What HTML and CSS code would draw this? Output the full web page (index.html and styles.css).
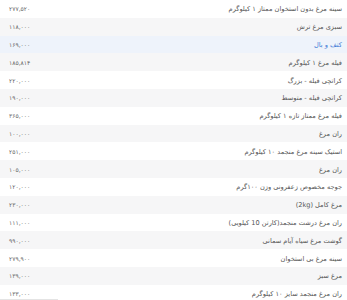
FILE: index.html
```html
<!DOCTYPE html>
<html lang="fa">
<head>
<meta charset="utf-8">
<link rel="stylesheet" href="styles.css">
</head>
<body>
<div class="frame">
<ul class="prices">
<li class="row"><span class="name">سینه مرغ بدون استخوان ممتاز ۱ کیلوگرم</span><span class="price">۲۷۷,۵۲۰</span></li>
<li class="row"><span class="name">سبزی مرغ ترش</span><span class="price">۱۱۸,۰۰۰</span></li>
<li class="row active"><span class="name">کتف و بال</span><span class="price">۱۶۹,۰۰۰</span></li>
<li class="row"><span class="name">فیله مرغ ۱ کیلوگرم</span><span class="price">۱۸۵,۸۱۴</span></li>
<li class="row"><span class="name">کراتچی فیله - بزرگ</span><span class="price">۲۲۰,۰۰۰</span></li>
<li class="row"><span class="name">کراتچی فیله - متوسط</span><span class="price">۱۹۰,۰۰۰</span></li>
<li class="row"><span class="name">فیله مرغ ممتاز تازه ۱ کیلوگرم</span><span class="price">۳۶۵,۰۰۰</span></li>
<li class="row"><span class="name">ران مرغ</span><span class="price">۱۰۰,۰۰۰</span></li>
<li class="row"><span class="name">استیک سینه مرغ منجمد ۱۰ کیلوگرم</span><span class="price">۲۵۱,۰۰۰</span></li>
<li class="row"><span class="name">ران مرغ</span><span class="price">۱۰۵,۰۰۰</span></li>
<li class="row"><span class="name">جوجه مخصوص زعفرونی وزن ۱۰۰گرم</span><span class="price">۱۲۰,۰۰۰</span></li>
<li class="row"><span class="name">مرغ کامل (2kg)</span><span class="price">۲۳۰,۰۰۰</span></li>
<li class="row"><span class="name">ران مرغ درشت منجمد(کارتن 10 کیلویی)</span><span class="price">۱۱۱,۰۰۰</span></li>
<li class="row"><span class="name">گوشت مرغ سیاه آیام سمانی</span><span class="price">۹۹۰,۰۰۰</span></li>
<li class="row"><span class="name">سینه مرغ بی استخوان</span><span class="price">۲۷۹,۹۰۰</span></li>
<li class="row"><span class="name">مرغ سبز</span><span class="price">۱۳۹,۰۰۰</span></li>
<li class="row"><span class="name">ران مرغ منجمد سایز ۱۰ کیلوگرم</span><span class="price">۱۳۳,۰۰۰</span></li>
</ul>
<div class="scroll-thumb"></div>
</div>
</body>
</html>
```
FILE: styles.css
```css
html, body {
  margin: 0;
  padding: 0;
  background: #ffffff;
  overflow: hidden;
}
body {
  font-family: "DejaVu Sans", "Noto Sans", sans-serif;
  font-size: 6.6px;
  color: #555555;
}
.frame {
  position: relative;
  height: 300px;
  overflow: hidden;
}
.prices {
  list-style: none;
  margin: 0;
  padding: 0;
}
.row {
  display: flex;
  justify-content: space-between;
  align-items: center;
  height: 17.8px;
  padding: 1px 5px 0 0;
  box-sizing: border-box;
  line-height: 10px;
}
.row:nth-child(even) {
  background: #f6f6f7;
}
.row.active {
  background: #eef3fb;
}
.row.active .name {
  color: #3d7ad6;
}
.name {
  order: 2;
  direction: rtl;
  white-space: nowrap;
}
.price {
  order: 1;
  margin-left: 9px;
  direction: ltr;
  unicode-bidi: isolate;
  color: #666666;
  font-size: 6px;
  white-space: nowrap;
}
.scroll-thumb {
  position: absolute;
  left: 0;
  top: 299px;
  width: 58px;
  height: 1px;
  background: #e4e4e4;
}
```
